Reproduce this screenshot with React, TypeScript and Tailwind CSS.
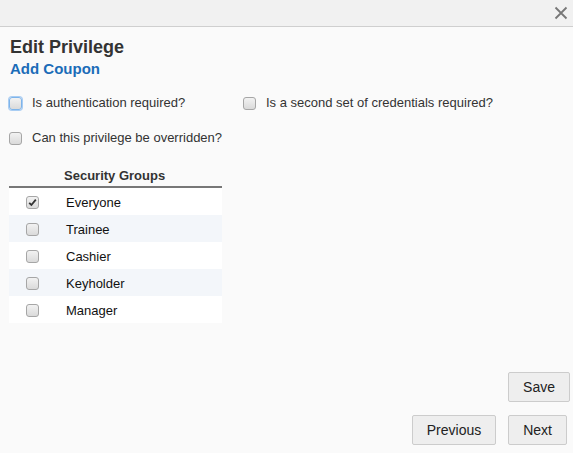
import React from "react";

function Box({ checked = false, focus = false }: { checked?: boolean; focus?: boolean }) {
  return (
    <span
      className={
        "relative inline-flex h-[13px] w-[13px] shrink-0 items-center justify-center rounded-[3px] border bg-gradient-to-b from-[#f2f2f2] to-[#dadada] " +
        (focus ? "border-[#7eb4ea] shadow-[0_0_0_1px_#a9cdf3]" : "border-[#a6a6a6]")
      }
    >
      {checked && (
        <svg width="9" height="9" viewBox="0 0 9 9">
          <path d="M1.2 4.8 L3.4 7 L7.8 1.6" fill="none" stroke="#333" strokeWidth="1.8" />
        </svg>
      )}
    </span>
  );
}

const groups = ["Everyone", "Trainee", "Cashier", "Keyholder", "Manager"];

export default function App() {
  return (
    <div
      className="flex h-[453px] w-[573px] flex-col bg-[#fafafa] text-[#333]"
      style={{ fontFamily: '"Liberation Sans", Arial, sans-serif' }}
    >
      <div className="flex h-[27px] shrink-0 items-center justify-end border-b border-[#cfcfcf] bg-[#f1f1f1] pr-[5px]">
        <svg width="14" height="14" viewBox="0 0 14 14">
          <path d="M1.5 1.5 L12.5 12.5 M12.5 1.5 L1.5 12.5" stroke="#777" strokeWidth="1.8" fill="none" />
        </svg>
      </div>
      <div className="flex flex-1 flex-col px-[9px] pt-[9px]">
        <div className="pl-[1px] text-[18px] font-bold leading-[22px] text-[#333]">Edit Privilege</div>
        <div className="mt-[2px] pl-[1px] text-[15px] font-bold leading-[18px] text-[#1b6cb8]">Add Coupon</div>
        <div className="mt-[17px] flex items-center text-[13px] leading-[16px]">
          <div className="flex w-[234px] items-center">
            <Box focus />
            <span className="ml-[10px]">Is authentication required?</span>
          </div>
          <div className="flex items-center">
            <Box />
            <span className="ml-[10px]">Is a second set of credentials required?</span>
          </div>
        </div>
        <div className="mt-[19px] flex items-center text-[13px] leading-[16px]">
          <Box />
          <span className="ml-[10px]">Can this privilege be overridden?</span>
        </div>
        <div className="mt-[19px] w-[213px] text-[13px]">
          <div className="flex h-[23px] items-center border-b-2 border-[#777] pl-[55px] font-bold text-[#333]">
            Security Groups
          </div>
          {groups.map((g, i) => (
            <div
              key={g}
              className={"flex h-[27px] items-center pt-[2px] " + (i % 2 === 1 ? "bg-[#f3f6fa]" : "bg-white")}
            >
              <div className="flex w-[57px] pl-[17px]">
                <Box checked={i === 0} />
              </div>
              <span className="text-[#111]">{g}</span>
            </div>
          ))}
        </div>
        <div className="mt-auto flex flex-col items-end pb-[8px] text-[14px]">
          <button className="mr-[-6px] h-[30px] rounded-[2px] border border-[#cccccc] bg-[#eeeeee] px-[14px] text-[#222]">
            Save
          </button>
          <div className="mt-[13px] flex gap-[12px]">
            <button className="h-[30px] rounded-[2px] border border-[#cccccc] bg-[#eeeeee] px-[14px] text-[#222]">
              Previous
            </button>
            <button className="mr-[-3px] h-[30px] rounded-[2px] border border-[#cccccc] bg-[#eeeeee] px-[14px] text-[#222]">
              Next
            </button>
          </div>
        </div>
      </div>
    </div>
  );
}
